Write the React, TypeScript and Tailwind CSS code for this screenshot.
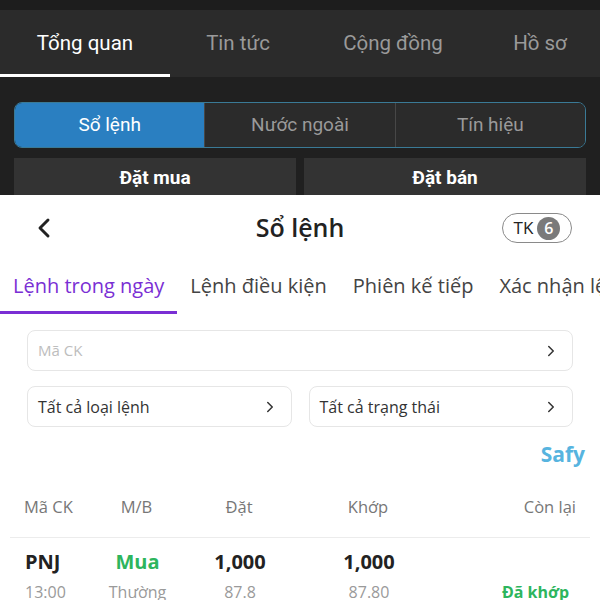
import { ChevronLeft, ChevronRight } from 'lucide-react';

const topTabs = [
  { label: 'Tổng quan', w: 'w-[170px]', active: true },
  { label: 'Tin tức', w: 'w-[136px]', active: false },
  { label: 'Cộng đồng', w: 'w-[174px]', active: false },
  { label: 'Hồ sơ', w: 'flex-1', active: false },
];

const segments = ['Sổ lệnh', 'Nước ngoài', 'Tín hiệu'];

const orderTabs = ['Lệnh trong ngày', 'Lệnh điều kiện', 'Phiên kế tiếp', 'Xác nhận lệnh'];

function SelectBox({ label, placeholder }: { label: string; placeholder?: boolean }) {
  return (
    <div className="flex h-[41px] flex-1 items-center justify-between rounded-lg border border-[#e6e6e6] pl-[10px] pr-[12px]">
      <span className={placeholder ? 'text-[15px] text-[#bdbdbd]' : 'text-[16px] text-[#333]'}>{label}</span>
      <ChevronRight size={18} strokeWidth={2} className="text-[#333]" />
    </div>
  );
}

export default function App() {
  return (
    <div className="h-[600px] w-[600px] overflow-hidden bg-white">
      {/* dark app behind */}
      <div className="h-[10px] bg-[#1d1d1d]" />
      <div className="flex h-[67px] bg-[#2b2b2b]" style={{ fontFamily: 'Roboto, sans-serif' }}>
        {topTabs.map((t) => (
          <div key={t.label} className={`${t.w} flex flex-col`}>
            <div className={`flex flex-1 items-center justify-center pt-[2px] text-[20.5px] ${t.active ? 'text-white' : 'text-[#9a9a9a]'}`}>
              {t.label}
            </div>
            <div className={`h-[3px] ${t.active ? 'bg-white' : 'bg-transparent'}`} />
          </div>
        ))}
      </div>
      <div className="h-[118px] overflow-hidden bg-[#202020] px-[14px] pt-[25px]" style={{ fontFamily: 'Roboto, sans-serif' }}>
        <div className="flex h-[46px] overflow-hidden rounded-lg border-[1.5px] border-[#3a7a96]">
          {segments.map((s, i) => (
            <div
              key={s}
              className={`flex flex-1 items-center justify-center text-[19px] ${
                i === 0 ? 'bg-[#2a7fc1] text-white' : 'border-l border-[#474747] bg-[#2b2b2b] text-[#9a9a9a]'
              }`}
            >
              {s}
            </div>
          ))}
        </div>
        <div className="mt-[10px] flex gap-[8px]">
          <div className="flex h-[40px] flex-1 items-center justify-center bg-[#333] text-[19px] font-bold text-white">Đặt mua</div>
          <div className="flex h-[40px] flex-1 items-center justify-center bg-[#333] text-[19px] font-bold text-white">Đặt bán</div>
        </div>
      </div>

      {/* white sheet */}
      <div className="bg-white" style={{ fontFamily: '"Open Sans", sans-serif' }}>
        <div className="relative flex h-[66px] items-center justify-center">
          <ChevronLeft size={32} strokeWidth={2.2} className="absolute left-[28px] text-[#222]" />
          <span className="text-[25px] font-semibold text-[#222]">Sổ lệnh</span>
          <div className="absolute right-[28px] flex h-[30px] w-[70px] items-center justify-center gap-[4px] rounded-full border-[1.5px] border-[#8a8a8a]">
            <span className="text-[17px] text-[#222]">TK</span>
            <span className="flex h-[23px] w-[23px] items-center justify-center rounded-full bg-[#7a7a7a] text-[16px] font-semibold text-white">6</span>
          </div>
        </div>

        <div className="flex h-[53px] whitespace-nowrap">
          {orderTabs.map((t, i) => (
            <div key={t} className="flex shrink-0 flex-col">
              <div className={`flex flex-1 items-center px-[13px] text-[20px] ${i === 0 ? 'text-[#7a2fd4]' : 'text-[#444]'}`}>{t}</div>
              <div className={`h-[3px] ${i === 0 ? 'bg-[#7a2fd4]' : 'bg-transparent'}`} />
            </div>
          ))}
        </div>

        <div className="px-[27px] pt-[16px]">
          <SelectBox label="Mã CK" placeholder />
          <div className="mt-[15px] flex gap-[17px]">
            <SelectBox label="Tất cả loại lệnh" />
            <SelectBox label="Tất cả trạng thái" />
          </div>
        </div>

        <div className="flex h-[42px] items-end justify-end pr-[15px]">
          <span className="text-[21px] leading-[30px] font-bold text-[#57b4df]">Safy</span>
        </div>

        <div className="grid h-[68px] grid-cols-[75px_75px_130px_128px_1fr] px-[24px] pt-[26px] text-[16.5px] leading-6 text-[#777]">
          <span>Mã CK</span>
          <span className="text-center">M/B</span>
          <span className="text-center">Đặt</span>
          <span className="text-center">Khớp</span>
          <span className="text-right">Còn lại</span>
        </div>

        <div className="mx-[10px] border-t border-[#ececec] px-[15px] pt-[10px]">
          <div className="grid grid-cols-[75px_75px_130px_128px_1fr] text-[20px] leading-7 font-bold">
            <span className="text-[#222]">PNJ</span>
            <span className="text-center text-[#2db55d]">Mua</span>
            <span className="text-center text-[#222]">1,000</span>
            <span className="text-center text-[#222]">1,000</span>
            <span />
          </div>
          <div className="mt-[4px] grid grid-cols-[75px_75px_130px_128px_1fr] text-[16px] leading-6 text-[#9a9a9a]">
            <span>13:00</span>
            <span className="text-center">Thường</span>
            <span className="text-center">87.8</span>
            <span className="text-center">87.80</span>
            <span className="pr-[6px] text-right font-bold text-[#2db55d]">Đã khớp</span>
          </div>
        </div>
      </div>
    </div>
  );
}
